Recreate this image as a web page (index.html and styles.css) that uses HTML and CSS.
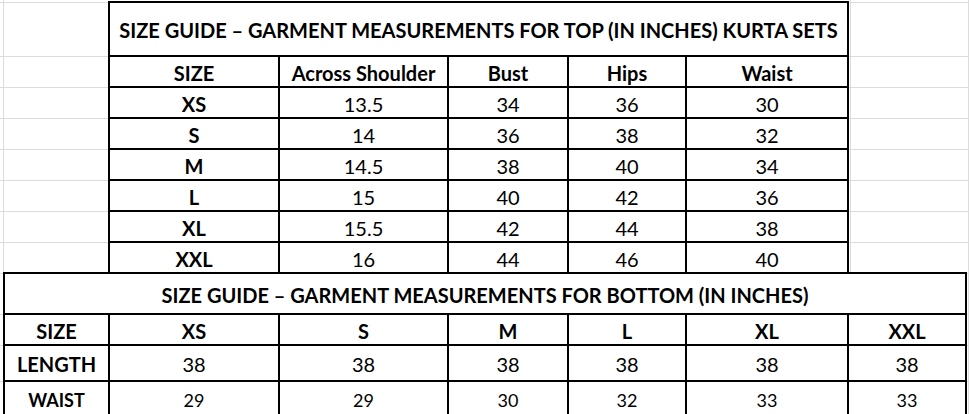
FILE: index.html
```html
<!DOCTYPE html>
<html lang="en">
<head>
<meta charset="utf-8">
<title>Size Guide</title>
<link rel="stylesheet" href="styles.css">
</head>
<body>
<main class="sheet">
  <section class="guide guide-top">
    <div class="cell title">SIZE GUIDE – GARMENT MEASUREMENTS FOR TOP (IN INCHES) KURTA SETS</div>
    <div class="cell label">SIZE</div>
    <div class="cell label">Across Shoulder</div>
    <div class="cell label">Bust</div>
    <div class="cell label">Hips</div>
    <div class="cell label">Waist</div>

    <div class="cell label">XS</div><div class="cell">13.5</div><div class="cell">34</div><div class="cell">36</div><div class="cell">30</div>
    <div class="cell label">S</div><div class="cell">14</div><div class="cell">36</div><div class="cell">38</div><div class="cell">32</div>
    <div class="cell label">M</div><div class="cell">14.5</div><div class="cell">38</div><div class="cell">40</div><div class="cell">34</div>
    <div class="cell label">L</div><div class="cell">15</div><div class="cell">40</div><div class="cell">42</div><div class="cell">36</div>
    <div class="cell label">XL</div><div class="cell">15.5</div><div class="cell">42</div><div class="cell">44</div><div class="cell">38</div>
    <div class="cell label last">XXL</div><div class="cell last">16</div><div class="cell last">44</div><div class="cell last">46</div><div class="cell last">40</div>
  </section>

  <section class="guide guide-bottom">
    <div class="cell title title-bottom">SIZE GUIDE – GARMENT MEASUREMENTS FOR BOTTOM (IN INCHES)</div>
    <div class="cell label">SIZE</div>
    <div class="cell label">XS</div>
    <div class="cell label">S</div>
    <div class="cell label">M</div>
    <div class="cell label">L</div>
    <div class="cell label">XL</div>
    <div class="cell label">XXL</div>

    <div class="cell label">LENGTH</div><div class="cell">38</div><div class="cell">38</div><div class="cell">38</div><div class="cell">38</div><div class="cell">38</div><div class="cell">38</div>

    <div class="cell label small">WAIST</div><div class="cell small">29</div><div class="cell small">29</div><div class="cell small">30</div><div class="cell small">32</div><div class="cell small">33</div><div class="cell small">33</div>
  </section>
</main>
</body>
</html>
```

FILE: styles.css
```css
html, body {
  margin: 0;
  padding: 0;
  background: #ffffff;
}

body {
  width: 969px;
  height: 414px;
  overflow: hidden;
  font-family: "Lato", "Open Sans", sans-serif;
  color: #000000;
}

.sheet {
  width: 969px;
  height: 414px;
  padding-top: 1px;
  box-sizing: border-box;
  background-color: #ffffff;
  background-image:
    linear-gradient(#dcdcdc, #dcdcdc),
    linear-gradient(#dcdcdc, #dcdcdc),
    linear-gradient(#dcdcdc, #dcdcdc),
    linear-gradient(#dcdcdc, #dcdcdc),
    linear-gradient(#dcdcdc, #dcdcdc),
    linear-gradient(#dcdcdc, #dcdcdc),
    linear-gradient(#dcdcdc, #dcdcdc),
    linear-gradient(#dcdcdc, #dcdcdc),
    linear-gradient(#dcdcdc, #dcdcdc),
    linear-gradient(#dcdcdc, #dcdcdc),
    linear-gradient(#dcdcdc, #dcdcdc),
    linear-gradient(#dcdcdc, #dcdcdc),
    linear-gradient(#dcdcdc, #dcdcdc),
    linear-gradient(#dcdcdc, #dcdcdc),
    linear-gradient(#dcdcdc, #dcdcdc);
  background-repeat: no-repeat;
  background-size:
    1px 100%, 1px 100%, 1px 100%,
    100% 1px, 100% 1px, 100% 1px, 100% 1px, 100% 1px, 100% 1px,
    100% 1px, 100% 1px, 100% 1px, 100% 1px, 100% 1px, 100% 1px;
  background-position:
    3px 0, 850px 0, 968px 0,
    0 2px, 0 56px, 0 87px, 0 118px, 0 149px, 0 180px,
    0 211px, 0 242px, 0 273px, 0 314px, 0 345px, 0 381px;
}

.guide {
  display: grid;
  border-left: 2px solid #000;
  border-top: 2px solid #000;
  background: #ffffff;
}

.guide-top {
  width: 741px;
  box-sizing: border-box;
  margin-left: 108px;
  grid-template-columns: 170px 169px 120px 118px 162px;
  grid-template-rows: 54px repeat(6, 31px) 29px;
}

.guide-bottom {
  width: 964px;
  box-sizing: border-box;
  margin-left: 3px;
  grid-template-columns: 105px 170px 169px 120px 118px 162px 118px;
  grid-template-rows: 41px 31px 36px 36px;
}

.cell {
  box-sizing: border-box;
  border-right: 2px solid #000;
  border-bottom: 2px solid #000;
  display: flex;
  align-items: center;
  justify-content: center;
  padding-top: 2px;
  font-size: 20px;
  font-weight: 400;
  white-space: nowrap;
  line-height: 1;
}

.cell.last {
  border-bottom: none;
}

.label {
  font-weight: 700;
}

.title {
  grid-column: 1 / -1;
  font-weight: 700;
  font-size: 20px;
  padding-top: 1px;
}

.title-bottom {
  padding-top: 3px;
}

.small {
  font-size: 18px;
}
```
